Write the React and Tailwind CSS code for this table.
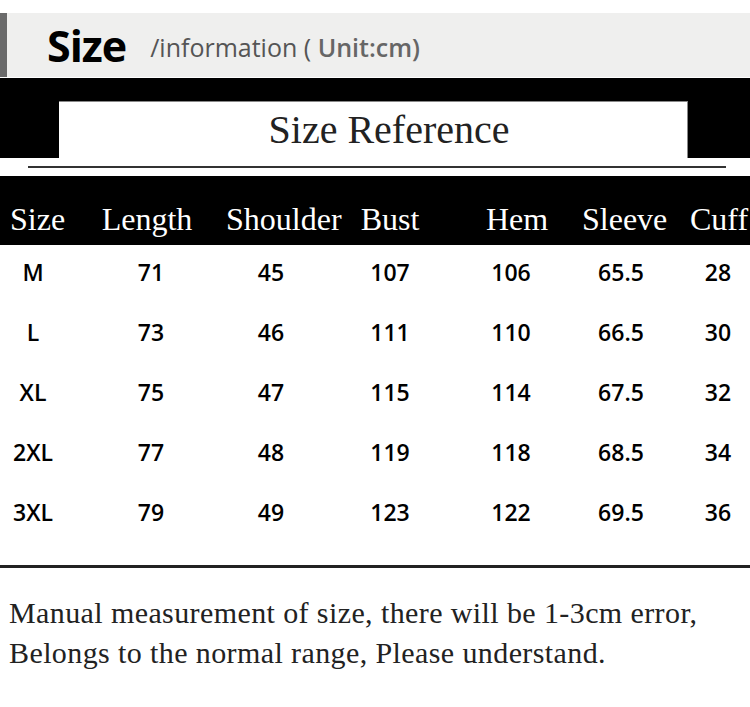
import React from 'react';

const cols = ['Size', 'Length', 'Shoulder', 'Bust', 'Hem', 'Sleeve', 'Cuff'];

const rows = [
  ['M', '71', '45', '107', '106', '65.5', '28'],
  ['L', '73', '46', '111', '110', '66.5', '30'],
  ['XL', '75', '47', '115', '114', '67.5', '32'],
  ['2XL', '77', '48', '119', '118', '68.5', '34'],
  ['3XL', '79', '49', '123', '122', '69.5', '36'],
];

const serif = { fontFamily: '"Liberation Serif", "Times New Roman", serif' };
const sans = { fontFamily: '"Open Sans", "Noto Sans", sans-serif' };

function App() {
  return (
    <div className="w-[750px] h-[707px] bg-white overflow-hidden">
      {/* Title bar */}
      <div className="pt-[13px]">
        <div className="h-[64px] bg-[#efefee] border-l-[7px] border-[#6a6a6a] flex items-center" style={sans}>
          <span className="ml-[40px] text-[43px] font-bold text-black tracking-[-1px] leading-none">Size</span>
          <span className="ml-[24px] mt-[4px] text-[25px] text-[#555] leading-none">
            /information ( <span className="font-semibold text-[#666]">Unit:cm)</span>
          </span>
        </div>
      </div>

      {/* Size Reference banner */}
      <div className="mt-[1px] h-[80px] bg-black pt-[23px] pl-[59px] pr-[62px]">
        <div className="h-[57px] bg-white border-t border-r border-[#888] flex items-center justify-center pl-[32px]">
          <span className="text-[40px] text-[#222] leading-none" style={serif}>Size Reference</span>
        </div>
      </div>
      <div className="h-[18px] flex items-center pl-[28px] pr-[24px]">
        <div className="w-full h-[2px] bg-[#333]" />
      </div>

      {/* Table */}
      <div className="h-[69px] bg-black overflow-hidden">
        <div className="grid grid-cols-[68px_158px_102px_124px_130px_84px_106px] w-[772px] h-full items-center pt-[16px]">
          {cols.map((c, i) => (
            <div
              key={c}
              className={`text-white text-[32px] leading-none ${i === 0 ? 'pl-[10px] text-left' : 'text-center'}`}
              style={serif}
            >
              {c}
            </div>
          ))}
        </div>
      </div>
      {rows.map((r) => (
        <div
          key={r[0]}
          className="grid grid-cols-[66px_170px_70px_168px_74px_146px_48px] h-[60px] items-center pb-[6px]"
          style={sans}
        >
          {r.map((v, i) => (
            <div key={i} className="text-center text-[23px] font-semibold text-black leading-none">
              {v}
            </div>
          ))}
        </div>
      ))}

      <div className="mt-[20px] h-[3px] bg-[#222]" />

      {/* Note */}
      <div className="pt-[25px] pl-[9px] text-[30px] leading-[40px] text-[#222]" style={serif}>
        <p className="tracking-[0.4px]">Manual measurement of size, there will be 1-3cm error,</p>
        <p className="tracking-[0.4px]">Belongs to the normal range, Please understand.</p>
      </div>
    </div>
  );
}

export default App;
